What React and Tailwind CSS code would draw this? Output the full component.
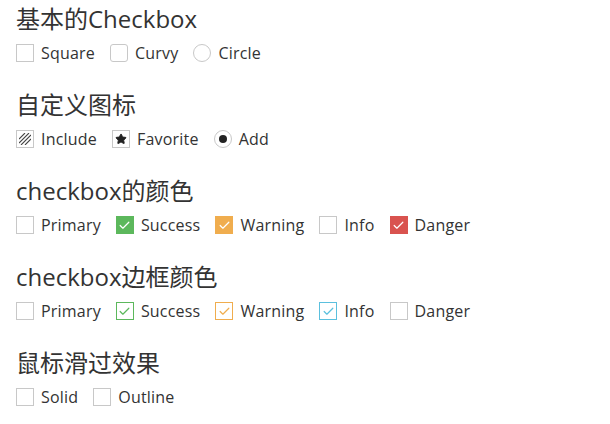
import { Check, Star } from 'lucide-react';

const font = { fontFamily: '"Open Sans", "Noto Sans CJK SC", sans-serif' };

function Box({ variant = 'plain', children }) {
    const styles = {
        plain: 'border border-[#c8c8c8] bg-white',
        curvy: 'border border-[#c8c8c8] bg-white rounded-[3px]',
        circle: 'border border-[#c8c8c8] bg-white rounded-full',
        success: 'bg-[#5cb85c]',
        warning: 'bg-[#f0ad4e]',
        danger: 'bg-[#d9534f]',
        oSuccess: 'border border-[#5cb85c] bg-white',
        oWarning: 'border border-[#f0ad4e] bg-white',
        oInfo: 'border border-[#5bc0de] bg-white',
    };
    return (
        <span className={`w-[18px] h-[18px] shrink-0 flex items-center justify-center ${styles[variant]}`}>
            {children}
        </span>
    );
}

function Item({ box, label }) {
    return (
        <label className="flex items-center gap-[7px] mr-[15px] h-[18px]">
            {box}
            <span className="text-[16px] text-[#333] leading-none tracking-[0.2px]">{label}</span>
        </label>
    );
}

function Hatch() {
    return (
        <svg width="12" height="12" viewBox="0 0 12 12" stroke="#444" strokeWidth="1.1">
            <line x1="0" y1="6" x2="6" y2="0" />
            <line x1="0" y1="10" x2="10" y2="0" />
            <line x1="2" y1="12" x2="12" y2="2" />
            <line x1="6" y1="12" x2="12" y2="6" />
        </svg>
    );
}

function Tick({ color }) {
    return <Check size={13} strokeWidth={2.2} color={color} />;
}

function Section({ title, first, children }) {
    return (
        <div className={first ? '' : 'mt-[28px]'}>
            <h2 className="h-[30px] leading-[30px] text-[24px] text-[#333]">{title}</h2>
            <div className="mt-[10px] flex items-center">{children}</div>
        </div>
    );
}

export default function App() {
    return (
        <div className="w-[610px] h-[424px] bg-white px-[16px] pt-[4px]" style={font}>
            <Section title="基本的Checkbox" first>
                <Item box={<Box />} label="Square" />
                <Item box={<Box variant="curvy" />} label="Curvy" />
                <Item box={<Box variant="circle" />} label="Circle" />
            </Section>
            <Section title="自定义图标">
                <Item box={<Box><Hatch /></Box>} label="Include" />
                <Item box={<Box><Star size={12} fill="#222" color="#222" /></Box>} label="Favorite" />
                <Item
                    box={
                        <Box variant="circle">
                            <span className="w-[8px] h-[8px] rounded-full bg-[#222]" />
                        </Box>
                    }
                    label="Add"
                />
            </Section>
            <Section title="checkbox的颜色">
                <Item box={<Box />} label="Primary" />
                <Item box={<Box variant="success"><Tick color="#fff" /></Box>} label="Success" />
                <Item box={<Box variant="warning"><Tick color="#fff" /></Box>} label="Warning" />
                <Item box={<Box />} label="Info" />
                <Item box={<Box variant="danger"><Tick color="#fff" /></Box>} label="Danger" />
            </Section>
            <Section title="checkbox边框颜色">
                <Item box={<Box />} label="Primary" />
                <Item box={<Box variant="oSuccess"><Tick color="#5cb85c" /></Box>} label="Success" />
                <Item box={<Box variant="oWarning"><Tick color="#f0ad4e" /></Box>} label="Warning" />
                <Item box={<Box variant="oInfo"><Tick color="#5bc0de" /></Box>} label="Info" />
                <Item box={<Box />} label="Danger" />
            </Section>
            <Section title="鼠标滑过效果">
                <Item box={<Box />} label="Solid" />
                <Item box={<Box />} label="Outline" />
            </Section>
        </div>
    );
}
